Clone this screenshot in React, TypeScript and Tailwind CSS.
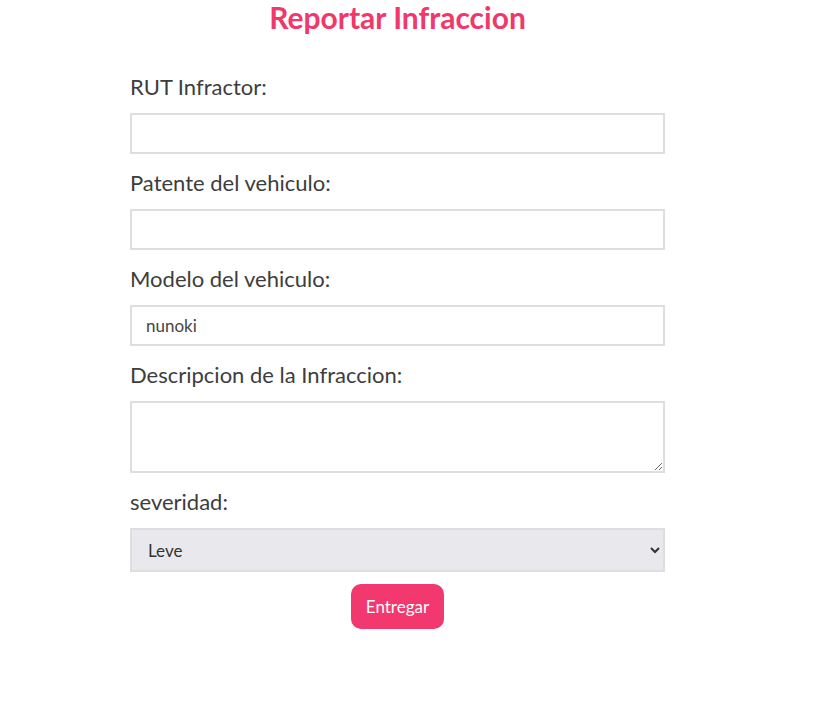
import React, { useState } from "react";

const labelCls = "block text-[22px] leading-[30px] text-[#3d3d3d] mb-[11px]";
const inputCls =
  "block w-full h-[41px] border-2 border-[#dedede] bg-white px-[14px] text-[17px] text-[#444] outline-none mb-[14px]";

export default function App() {
  const [rut, setRut] = useState("");
  const [patente, setPatente] = useState("");
  const [modelo, setModelo] = useState("nunoki");
  const [descripcion, setDescripcion] = useState("");
  const [severidad, setSeveridad] = useState("Leve");

  return (
    <div
      className="w-[795px] bg-white flex flex-col items-center"
      style={{ fontFamily: "Lato, 'Noto Sans', sans-serif" }}
    >
      <h1 className="text-[30px] leading-[34px] font-bold text-[#f0386b]">
        Reportar Infraccion
      </h1>

      <form className="w-[535px] mt-[38px]" onSubmit={(e) => e.preventDefault()}>
        <label className={labelCls}>RUT Infractor:</label>
        <input
          className={inputCls}
          value={rut}
          onChange={(e) => setRut(e.target.value)}
        />

        <label className={labelCls}>Patente del vehiculo:</label>
        <input
          className={inputCls}
          value={patente}
          onChange={(e) => setPatente(e.target.value)}
        />

        <label className={labelCls}>Modelo del vehiculo:</label>
        <input
          className={inputCls}
          value={modelo}
          onChange={(e) => setModelo(e.target.value)}
        />

        <label className={labelCls}>Descripcion de la Infraccion:</label>
        <textarea
          className="block w-full h-[72px] border-2 border-[#dedede] bg-white px-[14px] py-2 text-[17px] text-[#444] outline-none mb-[14px]"
          value={descripcion}
          onChange={(e) => setDescripcion(e.target.value)}
        />

        <label className={labelCls}>severidad:</label>
        <select
          className="block w-full h-[44px] border-2 border-[#dedede] bg-[#e9e9ed] pl-[12px] pr-2 text-[17px] text-[#333]"
          value={severidad}
          onChange={(e) => setSeveridad(e.target.value)}
        >
          <option>Leve</option>
          <option>Grave</option>
          <option>Gravisima</option>
        </select>

        <div className="flex justify-center mt-[12px]">
          <button
            type="submit"
            className="h-[45px] px-[15px] rounded-[10px] bg-[#f2386f] text-white text-[17px]"
          >
            Entregar
          </button>
        </div>
      </form>
    </div>
  );
}
